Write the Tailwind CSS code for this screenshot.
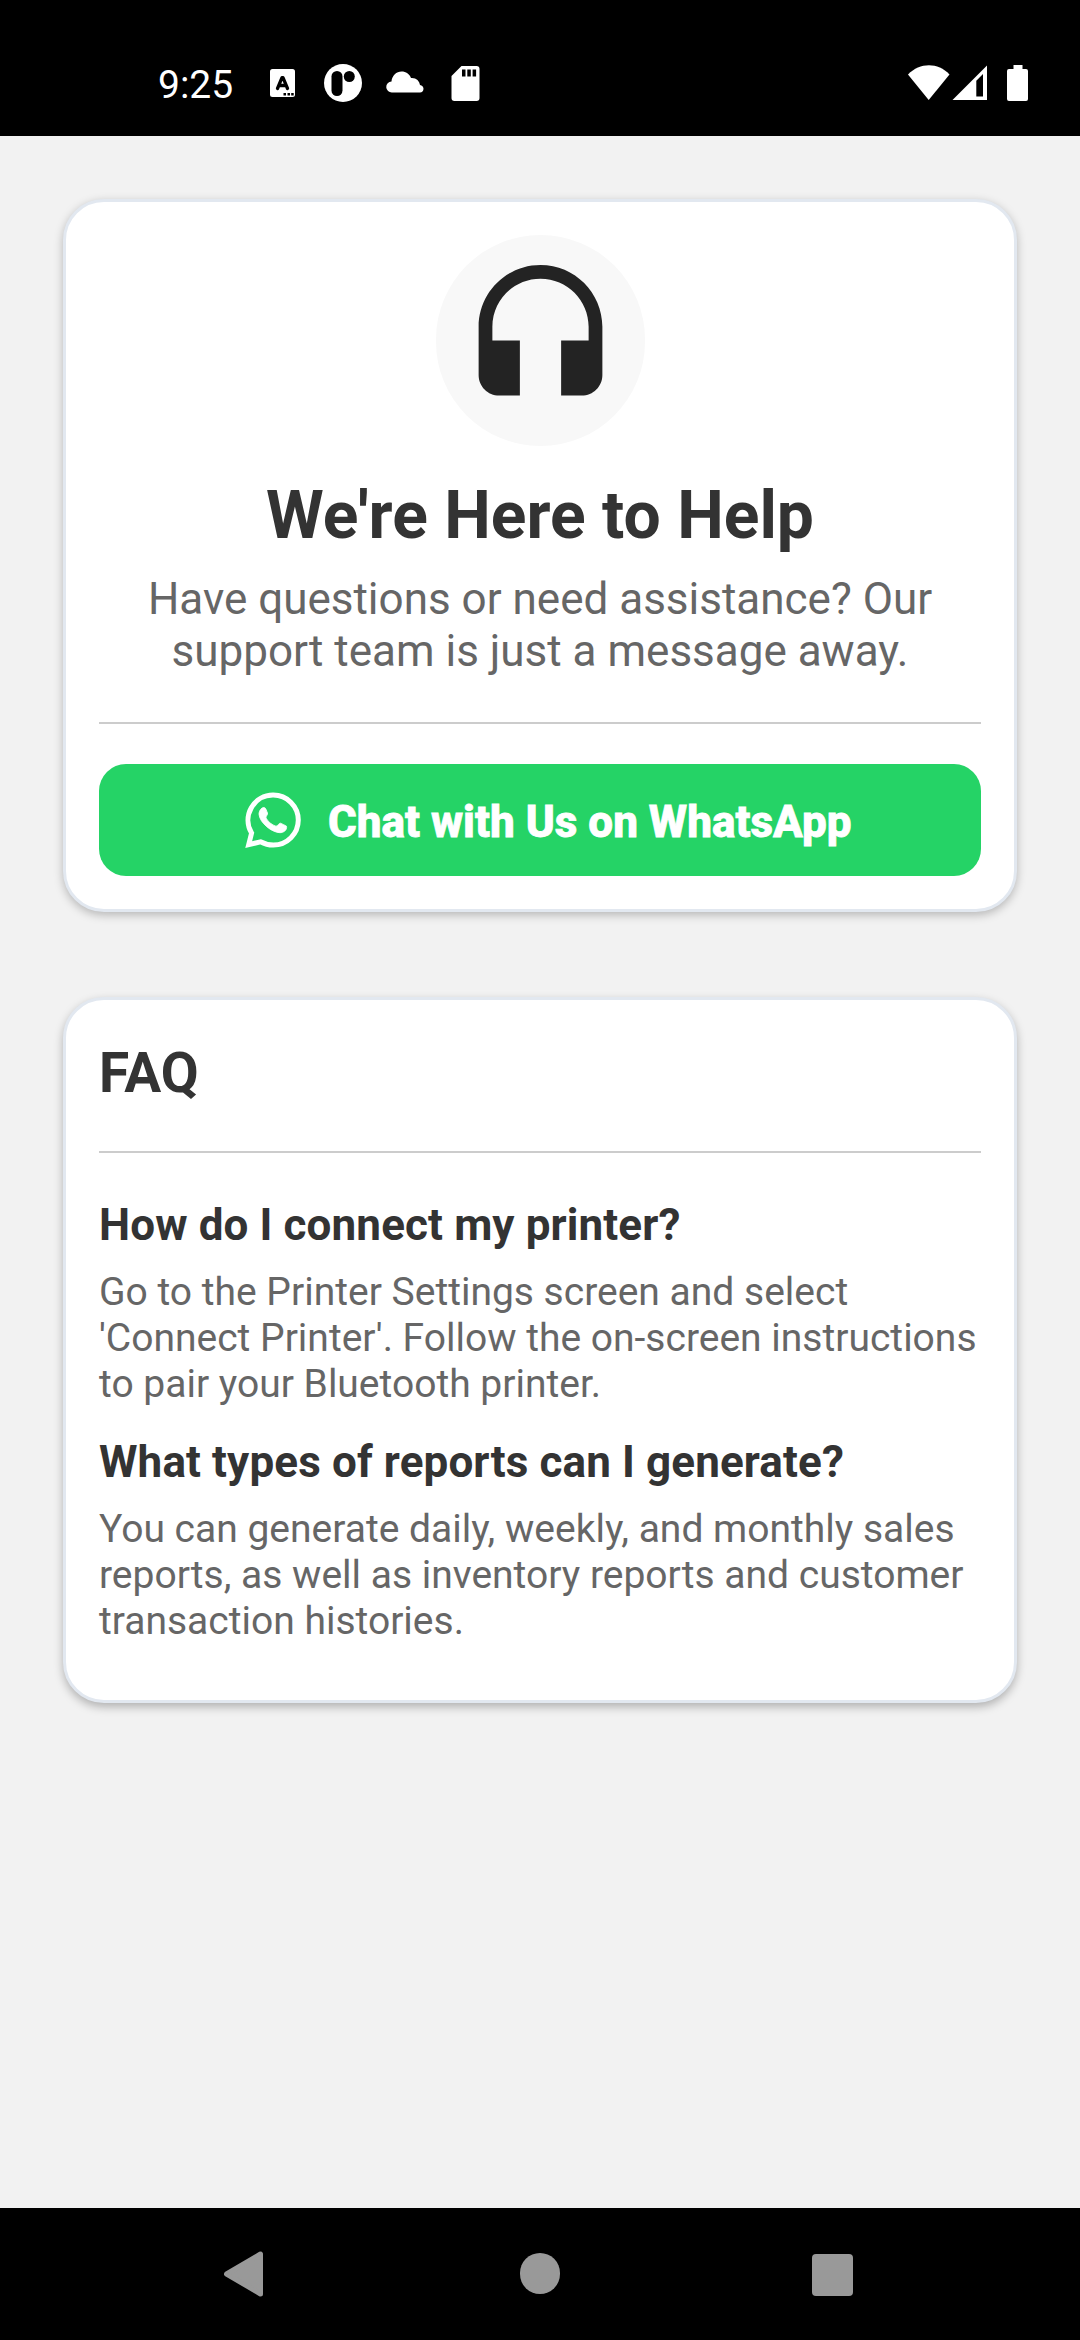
<!DOCTYPE html>
<html lang="en">
<head>
<meta charset="utf-8">
<title>Support</title>
<script src="https://cdn.jsdelivr.net/npm/@tailwindcss/browser@4"></script>
</head>
<body class="flex h-[2340px] w-[1080px] flex-col overflow-hidden bg-[#f2f2f2] font-['Roboto',sans-serif]">
<header class="flex h-[136px] shrink-0 items-start bg-black pl-[158px] pt-[60px] text-white">
  <div class="mt-[2px] h-[46px] w-[76px] whitespace-nowrap text-[39px] leading-[46px]">9:25</div>
  <svg class="ml-[36px] mt-[9px] h-[28px] w-[25px]" viewBox="0 0 25 28"><rect width="25" height="28" rx="2.5" fill="#fff"/><path d="M7.500 19.500L12 8.700H13L17.500 19.500M9.500 16.500H15.500" stroke="#000" stroke-width="3.300" stroke-linejoin="round" stroke-linecap="round" fill="none"/><path d="M13.500 24h2.500v2.500h-2.500zM17.500 24h2.500v2.500h-2.500zM21.200 24h2.500v2.500h-2.500z" fill="#000"/></svg>
  <svg class="ml-[29px] mt-[4px] h-[38px] w-[38px]" viewBox="0 0 38 38"><circle cx="19" cy="19" r="19" fill="#fff"/><rect x="7.500" y="7" width="11" height="25" rx="5.500"/><circle cx="25.300" cy="12.500" r="5.500"/></svg>
  <svg class="ml-[24px] mt-[11px] h-[22px] w-[38px]" viewBox="0 0 38 22"><path d="M6 21.500a5.500 5.500 0 0 1-.5-11C6 4.500 10.500.5 15.500.5c4.500 0 8 2.500 9.500 6.500 5-.5 8.500 3 9 7 2 .3 3.500 2 3.500 3.800 0 2.200-1.500 3.700-3.500 3.700z" fill="#fff"/></svg>
  <svg class="ml-[27px] mt-[6px] h-[35px] w-[29px]" viewBox="0 0 29 35"><path d="M10.500 0H25.500Q28.500 0 28.500 3V32Q28.500 35 25.500 35H3.500Q.5 35 .5 32V10z" fill="#fff"/><path d="M11 3.500h3.500v7h-3.500zM16.300 3.500h3.500v7h-3.500zM21.600 3.500h3.500v7h-3.500z" fill="#000"/></svg>
  <svg class="ml-[428px] mt-[5px] h-[36px] w-[42px]" viewBox="0 0 42 36"><path d="M0 9.500C12-2.700 30-2.700 41.500 9.500L20.700 35z" fill="#fff"/></svg>
  <svg class="ml-[2px] mt-[5px] h-[36px] w-[36px]" viewBox="0 0 36 36"><path fill-rule="evenodd" d="M.5 35L35 .5V35zM24.300 15.700V31.500H31V9z" fill="#fff"/></svg>
  <svg class="ml-[19px] mt-[5px] h-[36px] w-[22px]" viewBox="0 0 22 36"><path d="M6.500 0h9v4h3.500q2 0 2 2v28q0 2-2 2h-17q-2 0-2-2v-28q0-2 2-2h4.500z" fill="#fff"/></svg>
</header>
<main class="flex grow flex-col gap-[85px] px-[63px] pt-[63px]">
  <section class="flex h-[713px] flex-col items-center rounded-[41px] border-3 border-[#e2e8f0] bg-white px-[33px] pt-[33px] shadow-[0_3px_10px_rgba(0,0,0,0.25)]">
    <div class="flex h-[211px] w-[209px] shrink-0 items-center justify-center rounded-full bg-[#f8f8f8]">
      <svg class="h-[165px] w-[165px]" viewBox="0 0 24 24" fill="#232323"><path d="M12 1c-4.970 0-9 4.030-9 9v7c0 1.660 1.340 3 3 3h3v-8H5v-2c0-3.870 3.130-7 7-7s7 3.130 7 7v2h-4v8h3c1.660 0 3-1.340 3-3v-7c0-4.970-4.030-9-9-9z"/></svg>
    </div>
    <h1 class="mt-[31px] h-[78px] whitespace-nowrap text-[66px] font-bold leading-[78px] text-[#333]">We're Here to Help</h1>
    <p class="mt-[18px] h-[104px] whitespace-nowrap text-center text-[44px] leading-[52px] text-[#666]">Have questions or need assistance? Our<br>support team is just a message away.</p>
    <div class="mt-[45px] h-[2px] w-full bg-[#ccc]"></div>
    <button class="mt-[40px] flex h-[112px] w-full items-center rounded-[27px] bg-[#25d366] pl-[146px] text-white">
      <svg class="h-[56px] w-[56px]" viewBox="0 0 56 56"><path d="M28.300 3.100A25 25 0 0 1 28.300 53.100Q21.500 53.100 15.500 49.800L3.700 52.600 6.600 41A25 25 0 0 1 28.300 3.100z" fill="none" stroke="#fff" stroke-width="5"/><path d="M19 15.500c2 0 2.700 4 3.500 5.500.7 1.500-2 3.500-1.500 5 2 3.700 6 7 10 8.200 1.600.3 3-3.500 4.500-3 2 .8 4.500 2 6 3 .8 4-3 6.500-6.500 6.500-8 0-20.500-10-21-18.500 0-3 2-6.700 5-6.700z" fill="#fff" stroke="#fff" stroke-width=".8" stroke-linejoin="round"/></svg>
      <span class="ml-[27px] whitespace-nowrap pt-[4px] text-[44px] font-extrabold leading-[52px] [-webkit-text-stroke:0.8px_white]">Chat with Us on WhatsApp</span>
    </button>
  </section>
  <section class="flex h-[706px] flex-col rounded-[41px] border-3 border-[#e2e8f0] bg-white px-[33px] pt-[33px] text-[#666] shadow-[0_4px_10px_rgba(0,0,0,0.27)]">
    <h2 class="mt-[8px] h-[64px] text-[55px] font-bold leading-[64px] text-[#333]">FAQ</h2>
    <div class="mt-[46px] h-[2px] w-full bg-[#ccc]"></div>
    <h3 class="mt-[46px] h-[52px] whitespace-nowrap text-[44px] font-bold leading-[52px] tracking-[0.12px] text-[#333]">How do I connect my printer?</h3>
    <p class="mt-[18px] h-[138px] whitespace-nowrap text-[39px] leading-[46px]">Go to the Printer Settings screen and select<br>'Connect Printer'. Follow the on-screen instructions<br>to pair your Bluetooth printer.</p>
    <h3 class="mt-[29px] h-[52px] whitespace-nowrap text-[44px] font-bold leading-[52px] tracking-[0.12px] text-[#333]">What types of reports can I generate?</h3>
    <p class="mt-[18px] h-[138px] whitespace-nowrap text-[39px] leading-[46px]">You can generate daily, weekly, and monthly sales<br>reports, as well as inventory reports and customer<br>transaction histories.</p>
  </section>
</main>
<nav class="flex h-[132px] shrink-0 bg-black pl-[224px] pt-[43px]">
  <svg class="h-[46px] w-[40px]" viewBox="0 0 40 46"><path d="M36.500 3V43L2.500 23z" fill="#999" stroke="#999" stroke-width="5" stroke-linejoin="round"/></svg>
  <div class="ml-[256px] mt-[2px] h-[41px] w-[40px] rounded-full bg-[#999]"></div>
  <div class="ml-[252px] mt-[3px] h-[42px] w-[41px] rounded-[4px] bg-[#999]"></div>
</nav>
</body>
</html>
